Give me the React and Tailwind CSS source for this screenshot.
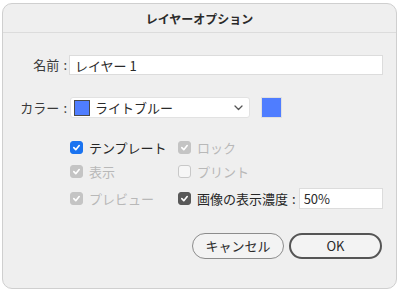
import { useState } from "react";

const font = { fontFamily: '"Noto Sans CJK JP", "Noto Sans", sans-serif' };

function Check({ state }) {
  // state: 'blue' | 'gray' | 'dark' | 'off'
  const box =
    state === "blue"
      ? "bg-[#1a73f0] border-[#1a73f0]"
      : state === "dark"
      ? "bg-[#595959] border-[#595959]"
      : state === "gray"
      ? "bg-[#c4c4c4] border-[#c4c4c4]"
      : "bg-[#f6f6f6] border-[#c8c8c8]";
  return (
    <span className={`flex h-[13px] w-[13px] shrink-0 items-center justify-center rounded-[3px] border ${box}`}>
      {state !== "off" && (
        <svg width="9" height="9" viewBox="0 0 10 10" fill="none">
          <path d="M2 5.2 L4.2 7.4 L8 2.8" stroke="white" strokeWidth="1.8" strokeLinecap="round" strokeLinejoin="round" />
        </svg>
      )}
    </span>
  );
}

function Option({ state, label, disabled, children }) {
  return (
    <div className="flex items-center gap-[6px]">
      <Check state={state} />
      <span className={`text-[13px] leading-none ${disabled ? "text-[#b8b8b8]" : "text-[#262626]"}`}>{label}</span>
      {children}
    </div>
  );
}

function Label({ text }) {
  return (
    <span className="flex w-[66px] shrink-0 items-center justify-end text-[13px] text-[#3a3a3a]">
      {text}
      <span className="ml-[4px] mr-[2px]">:</span>
    </span>
  );
}

export default function App() {
  const [name, setName] = useState("レイヤー 1");
  const [dim, setDim] = useState("50%");

  return (
    <div className="h-[292px] w-[400px] bg-white pl-[2px] pt-[3px]" style={font}>
      <div className="h-[286px] w-[395px] rounded-[10px] border border-[#cfcfcf] bg-[#efefef]">
        {/* Title */}
        <div className="flex h-[29px] items-center justify-center border-b border-[#dcdcdc] pt-[1px]">
          <span className="text-[12px] font-bold text-[#2a2a2a]">レイヤーオプション</span>
        </div>

        {/* Name */}
        <div className="mt-[22px] flex h-[20px] items-center">
          <Label text="名前" />
          <input
            value={name}
            onChange={(e) => setName(e.target.value)}
            className="h-[20px] w-[314px] border border-[#dcdcdc] bg-white px-[5px] text-[13px] text-[#2a2a2a] outline-none"
          />
        </div>

        {/* Color */}
        <div className="mt-[22px] flex h-[21px] items-center">
          <Label text="カラー" />
          <div className="ml-[1px] flex h-[21px] w-[180px] items-center rounded-[3px] border border-[#e2e2e2] bg-white pl-[3px] pr-[6px]">
            <span className="h-[16px] w-[16px] border border-[#4a4a4a] bg-[#4f7dff]" />
            <span className="ml-[5px] flex-1 text-[13px] text-[#2a2a2a]">ライトブルー</span>
            <svg width="9" height="6" viewBox="0 0 9 6" fill="none">
              <path d="M1 1 L4.5 4.5 L8 1" stroke="#555" strokeWidth="1.3" strokeLinecap="round" strokeLinejoin="round" />
            </svg>
          </div>
          <span className="ml-[11px] h-[21px] w-[21px] border border-[#e0e0e0] bg-[#4f7dff]" />
        </div>

        {/* Options */}
        <div className="ml-[67px] mt-[17px] grid grid-cols-[108px_1fr] grid-rows-[24px_24px_31px] items-center">
          <Option state="blue" label="テンプレート" />
          <Option state="gray" label="ロック" disabled />
          <Option state="gray" label="表示" disabled />
          <Option state="off" label="プリント" disabled />
          <Option state="gray" label="プレビュー" disabled />
          <Option state="dark" label="画像の表示濃度">
            <span className="-ml-[2px] text-[13px] leading-none text-[#262626]">:</span>
            <input
              value={dim}
              onChange={(e) => setDim(e.target.value)}
              className="-ml-[3px] h-[21px] w-[84px] border border-[#dcdcdc] bg-white px-[4px] text-[13px] text-[#2a2a2a] outline-none"
            />
          </Option>
        </div>

        {/* Buttons */}
        <div className="mt-[19px] flex justify-end gap-[5px] pr-[14px]">
          <button className="h-[26px] w-[92px] rounded-full border border-[#8c8c8c] bg-[#f3f3f3] text-[13px] text-[#2a2a2a]">
            キャンセル
          </button>
          <button className="h-[26px] w-[93px] rounded-full border-2 border-[#555] bg-[#f3f3f3] text-[13px] text-[#2a2a2a]">
            OK
          </button>
        </div>
      </div>
    </div>
  );
}
